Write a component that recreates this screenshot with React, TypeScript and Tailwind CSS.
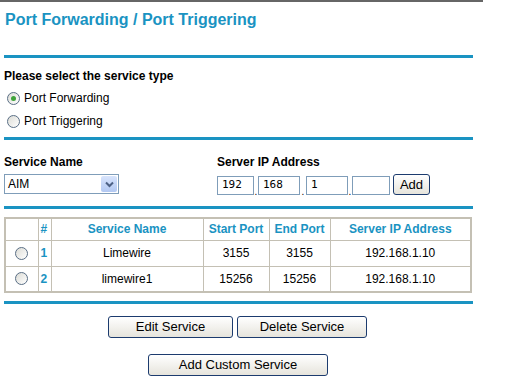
import type { ReactNode } from "react";

const rows = [
  { n: 1, name: "Limewire", start: "3155", end: "3155", ip: "192.168.1.10" },
  { n: 2, name: "limewire1", start: "15256", end: "15256", ip: "192.168.1.10" },
];

function Rule({ mt }: { mt: string }) {
  return <div className={`${mt} ml-[4px] h-[3px] w-[469px] bg-[#1a93c2]`} />;
}

function Radio({ checked }: { checked?: boolean }) {
  return (
    <span className="flex h-[13px] w-[13px] items-center justify-center rounded-full border border-[#5a6f86] bg-gradient-to-br from-[#dcdcd6] to-white">
      {checked && <span className="h-[5px] w-[5px] rounded-full bg-[#3fa33a]" />}
    </span>
  );
}

function XpButton({ children, w }: { children: ReactNode; w: string }) {
  return (
    <button
      className={`${w} h-[22px] rounded-[3px] border border-[#1c3b6e] bg-gradient-to-b from-white to-[#e6e4dc] text-[13px] text-black`}
    >
      {children}
    </button>
  );
}

function IpBox({ v, w }: { v: string; w: string }) {
  return (
    <div
      className={`${w} flex h-[19px] items-center border border-[#7f9db9] bg-white pl-[4px] font-['DejaVu_Sans_Mono',monospace] text-[11px]`}
    >
      {v}
    </div>
  );
}

function Dot({ w }: { w: string }) {
  return <span className={`${w} text-center text-[10px] leading-[6px]`}>.</span>;
}

export default function App() {
  const th = "border border-[#c4c0b4] font-bold text-[#1a93c2]";
  const td = "border border-[#c4c0b4] text-center";
  return (
    <div className="h-[384px] w-[512px] overflow-hidden bg-white font-['Liberation_Sans',Arial,sans-serif] text-[12px] text-black">
      <div className="h-[2px] w-[483px] bg-[#666]" />
      <h1 className="ml-[5px] mt-[8px] h-[20px] text-[16px] font-bold leading-[20px] text-[#1a93c2]">
        Port Forwarding / Port Triggering
      </h1>
      <Rule mt="mt-[25px]" />

      <div className="ml-[4px] mt-[11px] h-[14px] text-[12px] font-bold leading-[14px]">
        Please select the service type
      </div>
      <div className="ml-[7px] mt-[7px] flex h-[16px] items-center gap-[4px]">
        <Radio checked />
        <span>Port Forwarding</span>
      </div>
      <div className="ml-[7px] mt-[7px] flex h-[16px] items-center gap-[4px]">
        <Radio />
        <span>Port Triggering</span>
      </div>
      <Rule mt="mt-[8px]" />

      <div className="mt-[15px] flex h-[40px]">
        <div className="ml-[4px] w-[213px]">
          <div className="h-[14px] text-[12px] font-bold leading-[14px]">Service Name</div>
          <div className="mt-[5px] flex h-[20px] w-[115px] items-center border border-[#7f9db9] bg-white">
            <span className="flex-1 pl-[3px] text-[12px]">AIM</span>
            <span className="mr-[1px] flex h-[16px] w-[16px] items-center justify-center rounded-[2px] bg-gradient-to-b from-[#d8e4fc] to-[#b2c8f2]">
              <svg width="9" height="7" viewBox="0 0 9 7">
                <path d="M1 1.5 L4.5 5 L8 1.5" fill="none" stroke="#4d6185" strokeWidth="2" />
              </svg>
            </span>
          </div>
        </div>
        <div>
          <div className="h-[14px] text-[12px] font-bold leading-[14px]">Server IP Address</div>
          <div className="mt-[5px] flex h-[21px] items-end">
            <IpBox v="192" w="w-[37px]" />
            <Dot w="w-[4px]" />
            <IpBox v="168" w="w-[42px]" />
            <Dot w="w-[6px]" />
            <IpBox v="1" w="w-[42px]" />
            <Dot w="w-[4px]" />
            <IpBox v="" w="w-[38px]" />
            <button className="ml-[3px] h-[21px] w-[37px] rounded-[3px] border border-[#1c3b6e] bg-gradient-to-b from-white to-[#e6e4dc] text-[13px]">
              Add
            </button>
          </div>
        </div>
      </div>
      <Rule mt="mt-[11px]" />

      <table className="ml-[4px] mt-[8px] w-[468px] table-fixed border-collapse border-2 border-[#c4c0b4] text-[12px]">
        <colgroup>
          <col className="w-[33px]" />
          <col className="w-[13px]" />
          <col className="w-[152px]" />
          <col className="w-[66px]" />
          <col className="w-[61px]" />
          <col />
        </colgroup>
        <thead>
          <tr className="h-[22px]">
            <th className={th} />
            <th className={`${th} pl-[2px] text-left`}>#</th>
            <th className={th}>Service Name</th>
            <th className={th}>Start Port</th>
            <th className={th}>End Port</th>
            <th className={th}>Server IP Address</th>
          </tr>
        </thead>
        <tbody>
          {rows.map((r) => (
            <tr key={r.n} className="h-[26px]">
              <td className={td}>
                <div className="flex justify-center">
                  <Radio />
                </div>
              </td>
              <td className="border border-[#c4c0b4] pl-[2px] font-bold text-[#1a93c2]">{r.n}</td>
              <td className={td}>{r.name}</td>
              <td className={td}>{r.start}</td>
              <td className={td}>{r.end}</td>
              <td className={td}>{r.ip}</td>
            </tr>
          ))}
        </tbody>
      </table>
      <Rule mt="mt-[8px]" />

      <div className="mt-[12px] flex gap-[4px] pl-[108px]">
        <XpButton w="w-[125px]">Edit Service</XpButton>
        <XpButton w="w-[130px]">Delete Service</XpButton>
      </div>
      <div className="mt-[16px] flex pl-[148px]">
        <XpButton w="w-[180px]">Add Custom Service</XpButton>
      </div>
    </div>
  );
}
